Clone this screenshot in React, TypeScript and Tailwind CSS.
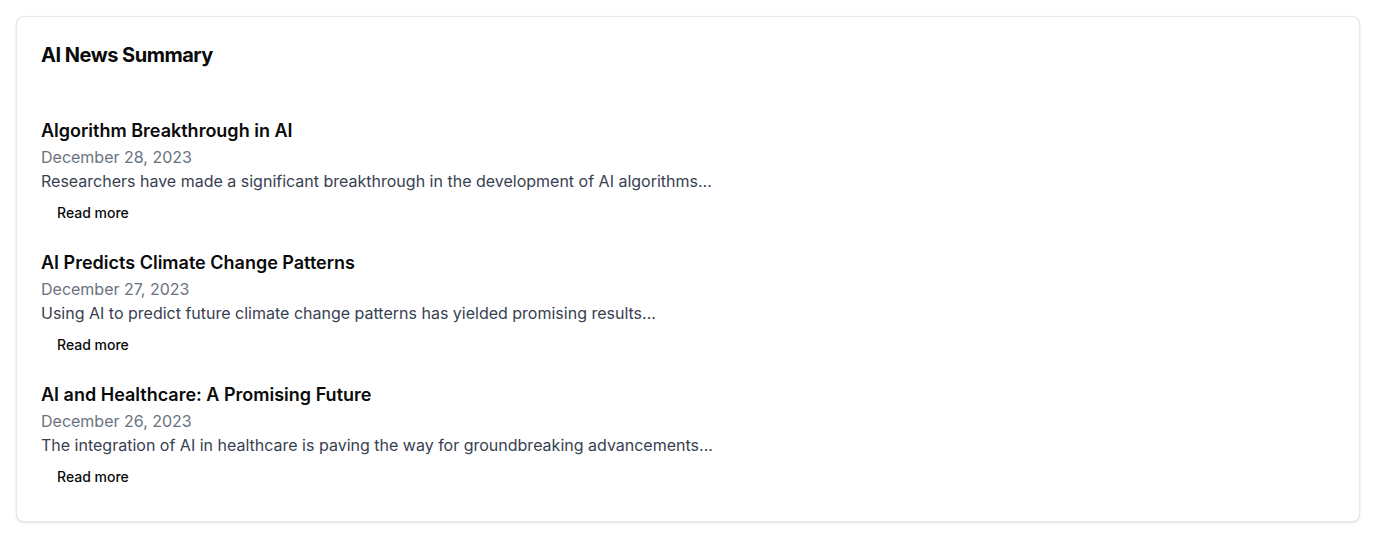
import React from 'react';

const NEWS = [
  {
    title: 'Algorithm Breakthrough in AI',
    date: 'December 28, 2023',
    summary: 'Researchers have made a significant breakthrough in the development of AI algorithms...',
  },
  {
    title: 'AI Predicts Climate Change Patterns',
    date: 'December 27, 2023',
    summary: 'Using AI to predict future climate change patterns has yielded promising results...',
  },
  {
    title: 'AI and Healthcare: A Promising Future',
    date: 'December 26, 2023',
    summary: 'The integration of AI in healthcare is paving the way for groundbreaking advancements...',
  },
];

const App: React.FC = () => {
  return (
    <div className="min-h-screen bg-white p-4 font-['Inter',sans-serif] text-[#0a0a0a]">
      <div className="rounded-lg border border-[#e5e7eb] bg-white shadow-sm">
        {/* Header */}
        <div className="p-6">
          <h2 className="text-xl leading-7 font-bold tracking-tight">AI News Summary</h2>
        </div>

        {/* News list */}
        <div className="flex flex-col gap-4 px-6 pb-6 pt-6">
          {NEWS.map((item) => (
            <div key={item.title} className="flex flex-col">
              <h3 className="text-lg leading-7 font-semibold">{item.title}</h3>
              <p className="text-base leading-6 text-[#6b7280]">{item.date}</p>
              <p className="text-base leading-6 text-[#374151]">{item.summary}</p>
              <div>
                <button className="h-10 px-4 rounded-md text-sm font-medium hover:bg-gray-100">
                  Read more
                </button>
              </div>
            </div>
          ))}
        </div>
      </div>
    </div>
  );
};

export default App;
